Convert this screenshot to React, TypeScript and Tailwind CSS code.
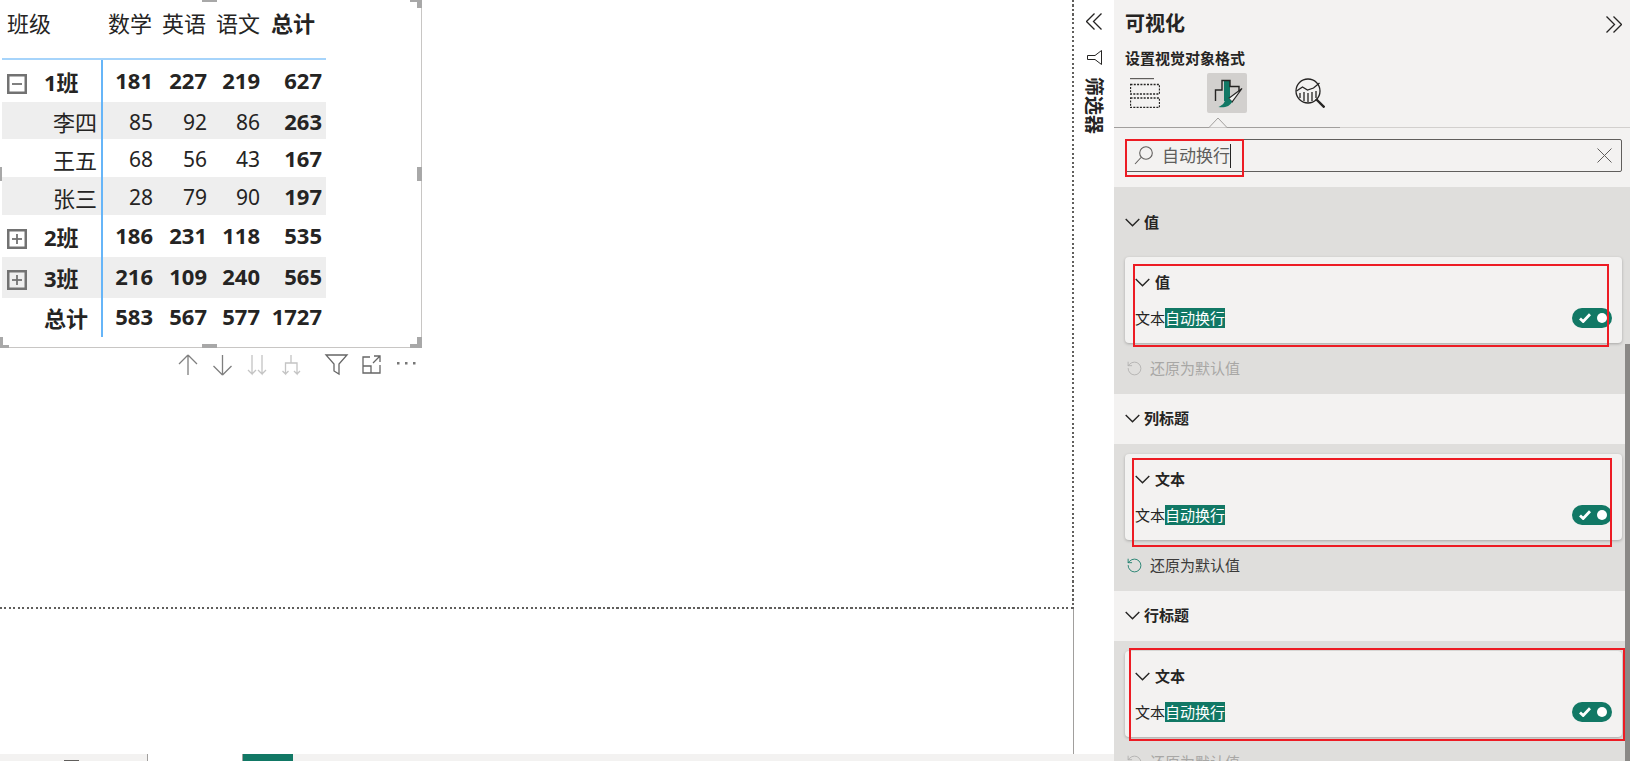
import React from "react";
import { RotateCcw } from "lucide-react";

const rows = [
  { name: "1班", vals: ["181", "227", "219", "627"], bold: true, h: "h-[42px]", icon: "minus" },
  { name: "李四", vals: ["85", "92", "86", "263"], h: "h-[37px]", shade: true },
  { name: "王五", vals: ["68", "56", "43", "167"], h: "h-[38px]" },
  { name: "张三", vals: ["28", "79", "90", "197"], h: "h-[38px]", shade: true },
  { name: "2班", vals: ["186", "231", "118", "535"], bold: true, h: "h-[42px]", icon: "plus" },
  { name: "3班", vals: ["216", "109", "240", "565"], bold: true, h: "h-[41px]", icon: "plus", shade: true },
  { name: "总计", vals: ["583", "567", "577", "1727"], bold: true, h: "h-[39px]", total: true },
];

const colW = ["w-[56px] pr-[6px]", "w-[54px] pr-[6px]", "w-[54px] pr-[7px]", "w-[59px] pr-[4px]"];

function ExpandBox({ type }: { type: string }) {
  return (
    <svg width="20" height="20" viewBox="0 0 20 20" fill="none" stroke="#727272" className="shrink-0 mt-[3px]">
      <rect x="1.250" y="1.250" width="17.500" height="17.500" strokeWidth="2.500" />
      <path d="M5 10h10" strokeWidth="1.800" />
      {type === "plus" && <path d="M10 5v10" strokeWidth="1.800" />}
    </svg>
  );
}

function Handle({ className }: { className: string }) {
  return <div className={"absolute bg-[#a8a8a8] " + className}></div>;
}

function Matrix() {
  return (
    <div className="relative w-[422px] h-[348px] border-r border-b border-[#c8c6c4] pl-[2px]">
      <div className="flex h-[60px] w-[324px] border-b-2 border-[#a6d4fb] text-[22px] leading-[30px] text-[#252423] pt-[8px]">
        <div className="w-[103px] pl-[5px]">班级</div>
        <div className="w-[54px] text-right pr-[7px]">数学</div>
        <div className="w-[54px] text-right pr-[7px]">英语</div>
        <div className="w-[54px] text-right pr-[7px]">语文</div>
        <div className="w-[59px] text-right pr-[11px] font-bold">总计</div>
      </div>
      {rows.map((r) => (
        <div key={r.name} className={"flex w-[324px] items-center text-[#252423] " + r.h + (r.shade ? " bg-[#eeeeee]" : "")}>
          <div className={"w-[101px] h-full flex items-center text-[22px] border-r-2 border-[#66b5f8] " + (r.bold ? "justify-start pl-[5px] pt-[2px]" : "justify-end pr-[4px] pt-[4px]")}>
            {r.icon ? <ExpandBox type={r.icon} /> : r.total ? <div className="w-[20px]"></div> : null}
            <span className={r.bold ? "font-bold ml-[17px]" : ""}>{r.name}</span>
          </div>
          {r.vals.map((v, i) => (
            <div key={i} className={colW[i] + " text-right leading-none " + (r.bold ? "pb-[3px] font-bold text-[22px]" : i === 3 ? "font-bold text-[22px]" : "pt-[3px] text-[21px]")}>
              {v}
            </div>
          ))}
        </div>
      ))}

      <Handle className="top-0 left-[202px] w-[15px] h-[2px]" />
      <Handle className="bottom-[-1px] left-[202px] w-[15px] h-[4px]" />
      <Handle className="top-[167px] left-0 w-[2px] h-[14px]" />
      <Handle className="top-[167px] right-[-1px] w-[5px] h-[14px]" />
      <Handle className="top-0 right-[-1px] w-[5px] h-[8px]" />
      <Handle className="top-0 right-[-1px] w-[12px] h-[2px]" />
      <Handle className="bottom-[-1px] right-[-1px] w-[12px] h-[4px]" />
      <Handle className="bottom-[-1px] right-[-1px] w-[5px] h-[11px]" />
      <Handle className="bottom-[-1px] left-0 w-[9px] h-[3px]" />
      <Handle className="bottom-[-1px] left-0 w-[3px] h-[11px]" />
    </div>
  );
}

function VisualToolbar() {
  return (
    <div className="ml-[178px] mt-[5px]">
      <svg width="240" height="24" viewBox="0 0 240 24" fill="none" strokeWidth="1.300">
        <path d="M10 2 1 11M10 2l9 9M10 2v20" stroke="#7f7f7f" />
        <path d="M44.500 22l-9-9M44.500 22l9-9M44.500 22V2" stroke="#7f7f7f" />
        <path d="M74 2v19l-4-4M74 21l4-4M84 2v19l-4-4M84 21l4-4" stroke="#c4c4c4" />
        <path d="M113 2v8M113 10h-5.500v11l-3-3M107.500 21l3-3M113 10h6v11l-3-3M119 21l3-3" stroke="#c4c4c4" />
        <path d="M148 2h21l-8 9v10l-5-3v-7z" stroke="#666666" />
        <path d="M185 8V4h7M185 8v12h17V12M185 13h8v7M196 3h6v6M202 3l-7 7" stroke="#666666" />
        <rect x="219" y="9" width="2.500" height="2.500" fill="#777777" />
        <rect x="227" y="9" width="2.500" height="2.500" fill="#777777" />
        <rect x="235" y="9" width="2.500" height="2.500" fill="#777777" />
      </svg>
    </div>
  );
}

function Toggle() {
  return (
    <div className="w-[40px] h-[20px] rounded-full bg-[#117865] flex items-center justify-between pl-[7px] pr-[5px]">
      <svg width="12" height="10" viewBox="0 0 12 10" fill="none" stroke="#ffffff" strokeWidth="2.800">
        <path d="M1 5.500 4.200 8.500 11 1.200" />
      </svg>
      <div className="w-[10px] h-[10px] rounded-full bg-white"></div>
    </div>
  );
}

function Chevron() {
  return (
    <svg width="15" height="9" viewBox="0 0 15 9" fill="none" stroke="#252423" strokeWidth="1.400" className="shrink-0">
      <path d="M.7 1l6.800 6.800L14.300 1" />
    </svg>
  );
}

function Card({ title }: { title: string }) {
  return (
    <div className="ml-[11px] w-[497px] h-[86px] rounded-[4px] bg-[#f3f2f1] shadow-[0_1px_3px_rgba(0,0,0,0.25)] pl-[10px] pr-[10px]">
      <div className="flex items-center h-[50px] text-[#252423]">
        <Chevron />
        <span className="ml-[5px] text-[15px] font-bold">{title}</span>
      </div>
      <div className="flex items-center justify-between h-[22px]">
        <div className="flex text-[15px] text-[#252423] leading-[20px]">
          文本<span className="bg-[#117865] text-white h-[20px]">自动换行</span>
        </div>
        <Toggle />
      </div>
    </div>
  );
}

function Reset({ active }: { active?: boolean }) {
  return (
    <div className={"flex items-center h-[51px] pl-[12px] text-[15px] " + (active ? "text-[#3b3a39]" : "text-[#a8a7a5]")}>
      <RotateCcw size={17} strokeWidth={1.200} className={active ? "text-[#117865]" : "text-[#b0afad]"} />
      <span className="ml-[7px]">还原为默认值</span>
    </div>
  );
}

function SectionHead({ title }: { title: string }) {
  return (
    <div className="flex items-center h-[50px] pl-[11px] pb-[1px] text-[#252423] bg-[#f3f2f1]">
      <Chevron />
      <span className="ml-[4px] text-[15px] font-bold">{title}</span>
    </div>
  );
}

function Panel() {
  return (
    <div className="relative w-[516px] h-full bg-[#f3f2f1] overflow-hidden">
      <div className="flex items-center justify-between h-[48px] pl-[11px] pr-[8px] text-[#252423]">
        <span className="text-[20px] font-bold">可视化</span>
        <svg width="16" height="17" viewBox="0 0 16 17" fill="none" stroke="#252423" strokeWidth="1.300">
          <path d="M.5.500l8 8-8 8M7.500.500l8 8-8 8" />
        </svg>
      </div>
      <div className="pl-[11px] text-[15px] font-bold leading-[20px] text-[#252423]">设置视觉对象格式</div>
      <div className="relative h-[55px] mt-[5px]">
        <div className="absolute bottom-0 left-0 w-[226px] h-px bg-[#a19f9d]"></div>
        <div className="absolute bottom-0 left-[226px] right-0 h-px bg-[#d2d0ce]"></div>
        <div className="flex items-start pl-[16px]">
          <svg width="30" height="30" viewBox="0 0 30 30" fill="none" stroke="#252423" className="mt-[5px]">
            <path d="M0 .5h24" strokeWidth="1.400" stroke="#605e5c" />
            <path d="M.5 6.500h29v9.500H.5zM.5 20h29v9.500H.5z" strokeDasharray="2 1.300" strokeWidth="1.300" />
          </svg>
          <div className="ml-[47px] w-[40px] h-[40px] rounded-[2px] bg-[#d2d0ce]">
            <svg width="40" height="40" viewBox="0 0 40 40">
              <rect x="17" y="8" width="6" height="20" fill="#117865" />
              <path d="M8.500 28V17H15V7.500H23V13.500H32V18" fill="none" stroke="#252423" strokeWidth="1.400" />
              <path d="M35 15.500 21.500 25.500 25 29z" fill="#f3f2f1" stroke="#252423" strokeWidth="1.200" />
              <path d="M11.500 34c6 .8 12-.5 13.500-5.500l-3.500-3.500c-3 .5-3.500 3.500-5 5.500-1 1.300-3 2.500-5 3.500z" fill="#117865" />
            </svg>
          </div>
          <svg width="30" height="30" viewBox="0 0 30 30" fill="none" stroke="#252423" strokeWidth="1.300" className="ml-[48px] mt-[5px]">
            <circle cx="13" cy="13" r="12" />
            <path d="M1.500 13l6-4 5 3 6-2 6-5" />
            <path d="M5 15v5M9 14v9M13 15v9M17 14v9M21 13v7" />
            <path d="M21 21l8.500 8.500" strokeWidth="2.400" />
          </svg>
        </div>
        <svg width="20" height="11" viewBox="0 0 20 11" fill="#f3f2f1" stroke="#a19f9d" className="absolute left-[94px] bottom-0">
          <path d="M0 10.500h1L10 1l9 9.500h1" />
        </svg>
      </div>

      <div className="mt-[11px] ml-[11px] mr-[8px] h-[33px] flex items-center border border-[#605e5c] rounded-[2px] pl-[8px] pr-[9px]">
        <svg width="19" height="19" viewBox="0 0 19 19" fill="none" stroke="#605e5c" strokeWidth="1.100">
          <circle cx="12" cy="7" r="6.300" />
          <path d="M7 11.500 1 18" />
        </svg>
        <span className="ml-[9px] text-[17px] text-[#605e5c]">自动换行</span>
        <span className="w-px h-[24px] bg-[#252423]"></span>
        <svg width="15" height="15" viewBox="0 0 15 15" fill="none" stroke="#605e5c" className="ml-auto">
          <path d="M.5.500l14 14M14.500.500l-14 14" />
        </svg>
      </div>

      <div className="mt-[15px] bg-[#dfdedc] h-[574px]">
        <div className="flex items-center h-[70px] pl-[11px] text-[#252423]">
          <Chevron />
          <span className="ml-[4px] text-[15px] font-bold">值</span>
        </div>
        <Card title="值" />
        <Reset />
        <SectionHead title="列标题" />
        <div className="h-[10px]"></div>
        <Card title="文本" />
        <Reset active />
        <SectionHead title="行标题" />
        <div className="h-[10px]"></div>
        <Card title="文本" />
        <Reset />
      </div>

      <div className="absolute right-0 top-[344px] bottom-0 w-[5px] bg-[#8a8886]"></div>

      <div className="absolute left-[11px] top-[139px] w-[119px] h-[38px] border-2 border-[#ed1c24]"></div>
      <div className="absolute left-[19px] top-[264px] w-[476px] h-[83px] border-2 border-[#ed1c24]"></div>
      <div className="absolute left-[18px] top-[458px] w-[480px] h-[89px] border-2 border-[#ed1c24]"></div>
      <div className="absolute left-[15px] top-[648px] w-[496px] h-[93px] border-2 border-[#ed1c24]"></div>
    </div>
  );
}

export default function App() {
  return (
    <div className="w-[1630px] h-[761px] flex overflow-hidden bg-white [font-family:'Noto_Sans','Noto_Sans_CJK_SC',sans-serif]">
      <div className="w-[1114px] flex flex-col">
        <div className="flex h-[754px]">
          <div className="w-[1074px] flex flex-col">
            <div className="flex h-[609px]">
              <div className="flex-1 flex flex-col">
                <div className="flex-1">
                  <Matrix />
                  <VisualToolbar />
                </div>
                <div className="h-[2px] bg-[repeating-linear-gradient(90deg,#605e5c_0,#605e5c_2px,transparent_2px,transparent_4.5px)]"></div>
              </div>
              <div className="w-[2px] bg-[repeating-linear-gradient(180deg,#605e5c_0,#605e5c_2px,transparent_2px,transparent_4.5px)]"></div>
            </div>
            <div className="flex-1 border-r border-[#a19f9d]"></div>
          </div>
          <div className="w-[40px] flex flex-col items-center pt-[13px] text-[#252423]">
            <svg width="16" height="17" viewBox="0 0 16 17" fill="none" stroke="#252423" strokeWidth="1.300">
              <path d="M8.500.500l-8 8 8 8M15.500.500l-8 8 8 8" />
            </svg>
            <svg width="15" height="15" viewBox="0 0 15 15" fill="none" stroke="#252423" className="mt-[20px] ml-[1px]">
              <path d="M14.500.5v14L8 9.500H.5V5.500H8z" />
            </svg>
            <div className="mt-[12px] text-[19px] font-bold leading-[20px] [writing-mode:vertical-rl] [text-orientation:sideways]">筛选器</div>
          </div>
        </div>
        <div className="flex h-[7px] bg-[#f3f2f1]">
          <div className="w-[148px] border-r border-[#a19f9d] pl-[64px] pt-[6px]">
            <div className="w-[15px] h-px bg-[#605e5c]"></div>
          </div>
          <div className="w-[95px] bg-white border-r border-[#a19f9d]"></div>
          <div className="w-[50px] bg-[#117865]"></div>
        </div>
      </div>
      <Panel />
    </div>
  );
}
